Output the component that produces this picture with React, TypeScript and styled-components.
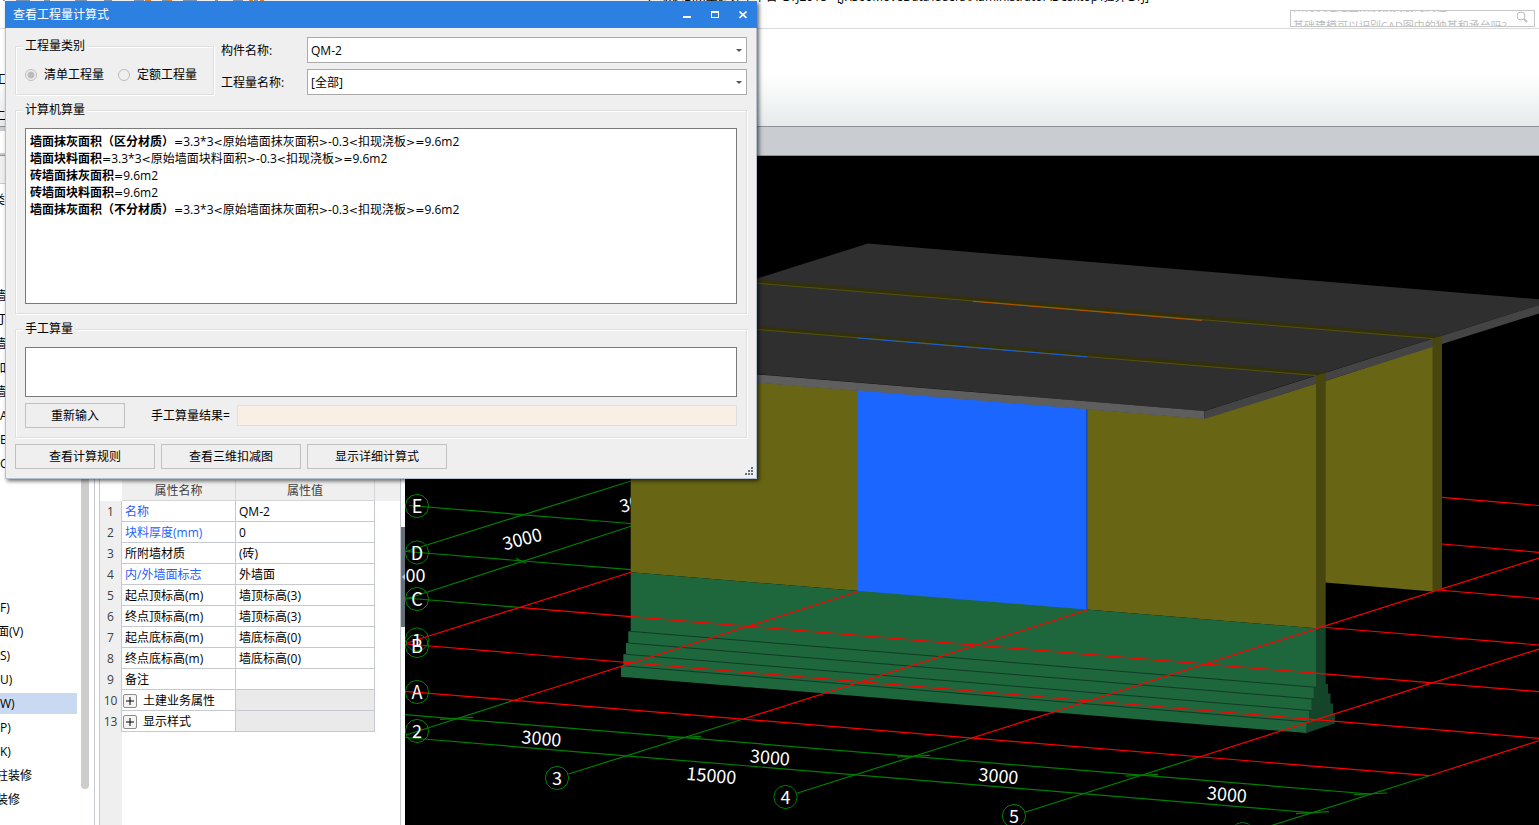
import React from "react";
import styled, { createGlobalStyle, css } from "styled-components";

const GlobalStyle = createGlobalStyle`
  * { box-sizing: border-box; }
  body {
    margin: 0;
    background: #fff;
    color: #000;
    font: 12px/16px "Open Sans", "Noto Sans CJK SC", sans-serif;
    overflow: hidden;
  }
  button, input, select, textarea { font: inherit; color: inherit; }
`;

const Page = styled.div`
  position: relative;
  display: flex;
  flex-direction: column;
  height: 100vh;
  overflow: hidden;
`;

/* ---------- main window: header ---------- */

const Header = styled.header`
  display: flex;
  justify-content: flex-end;
  height: 29px;
  border-bottom: 1px solid #d9d9d9;
  padding-right: 4px;
  overflow: hidden;
`;

const QuickBar = styled.svg`
  display: block;
  flex: none;
  width: 280px;
  height: 2px;
  margin-right: auto;
`;

const WindowTitle = styled.h1`
  margin: -11px 141px 0 0;
  font-size: 12px;
  line-height: 16px;
  font-weight: 400;
  white-space: nowrap;
`;

const SearchBox = styled.div`
  display: flex;
  width: 245px;
  height: 17px;
  margin-top: 10px;
  border: 1px solid #c6c6c6;
  background: #fff;
  overflow: hidden;
`;

const Ticker = styled.div`
  flex: 1;
  margin-top: -12px;
  padding-left: 2px;
`;

const TickerLink = styled.a`
  display: block;
  height: 19px;
  font-size: 11px;
  line-height: 16px;
  color: #bdbdbd;
  text-decoration: none;
  white-space: nowrap;
`;

const SearchButton = styled.button`
  width: 24px;
  padding: 0;
  border: 0;
  background: none;
`;

const Ribbon = styled.div`
  display: flex;
  flex-direction: column;
  flex: none;
  height: 98px;
  padding-top: 43px;
  gap: 20px;
  background: linear-gradient(#fff 0, #fff 45px, #f4f7f7 68px, #e6eaea 97px);
  border-bottom: 1px solid #8e929b;
`;

const RibbonLabel = styled.span`
  height: 16px;
  margin-left: -6px;
`;

const ContextBar = styled.div`
  flex: none;
  height: 29px;
  padding: 4px 0;
  background: #c9ccd1;
  border-bottom: 1px solid #8e929b;
`;

const ContextInput = styled.div`
  width: 60px;
  height: 22px;
  background: #fff;
`;

/* ---------- workspace ---------- */

const Workspace = styled.main`
  display: flex;
  flex: 1;
  min-height: 0;
`;

const TreePanel = styled.nav`
  display: flex;
  flex: none;
  width: 95px;
  border-right: 1px solid #c6c9cf;
  overflow: hidden;
`;

const TreeColumn = styled.div`
  width: 81px;
`;

const TreeHeader = styled.div`
  height: 28px;
  margin-bottom: 4px;
  background: #efefef;
  border-bottom: 1px solid #c6c9cf;
`;

const TreeRow = styled.div<{ $active?: boolean }>`
  display: flex;
  align-items: center;
  height: 24px;
  ${(p) =>
    p.$active &&
    css`
      height: 21px;
      margin: 1px 0 2px;
      width: 77px;
      background: #c8d9f1;
    `}
`;

const TreeText = styled.span<{ $cut: number }>`
  margin-left: ${(p) => -p.$cut}px;
  white-space: nowrap;
`;

const ScrollThumb = styled.div`
  width: 8px;
  height: 633px;
  border-radius: 4px;
  background: #cdcdcd;
`;

const PropertyPanel = styled.section`
  flex: none;
  width: 302px;
  margin-left: 4px;
  border-left: 1px solid #c6c9cf;
  border-right: 1px solid #c6c9cf;
  display: flex;
  flex-direction: column;
`;

const PropertyTop = styled.div`
  flex: none;
  height: 324px;
`;

const PropertyBody = styled.div`
  flex: 1;
  background: linear-gradient(90deg, #efefef 22px, #fff 22px);
`;

const PropertyHead = styled.div`
  height: 21px;
  margin-left: 22px;
  background: #efefef;
`;

const PropertyTable = styled.table`
  width: 275px;
  margin-top: -21px;
  border-collapse: separate;
  border-spacing: 0;
  table-layout: fixed;
`;

const Cell = styled.td<{ $blue?: boolean; $muted?: boolean }>`
  height: 21px;
  padding: 2px 3px 0;
  line-height: 18px;
  border-right: 1px solid #c6c9cf;
  border-bottom: 1px solid #c6c9cf;
  color: ${(p) => (p.$blue ? "#1f5fff" : "#000")};
  background: ${(p) => (p.$muted ? "#eaeaea" : "#fff")};
  white-space: nowrap;
`;

const HeadCell = styled.th`
  height: 21px;
  padding: 2px 0 0;
  line-height: 18px;
  font-weight: 400;
  color: #404040;
  background: #efefef;
  border-right: 1px solid #d5d5d5;
  border-bottom: 1px solid #d5d5d5;
  &:first-child {
    border: 0;
    background: #fff;
  }
`;

const NumberCell = styled.th`
  padding: 0;
  line-height: 20px;
  font-weight: 400;
  color: #404040;
  background: #efefef;
  border-right: 1px solid #c6c9cf;
`;

const NameWrap = styled.div`
  display: flex;
  align-items: center;
  gap: 6px;
`;

const ExpandButton = styled.button`
  width: 14px;
  height: 14px;
  margin-left: -2px;
  padding: 0;
  border: 1px solid #8c8c8c;
  border-radius: 2px;
  background: #f4f4f4;
  display: grid;
  place-items: center;
`;

const Splitter = styled.div`
  flex: none;
  width: 4px;
  padding-top: 371px;
`;

const SplitterGrip = styled.button`
  display: grid;
  place-items: center;
  width: 4px;
  height: 100px;
  padding: 0;
  border: 0;
  background: #64707c;
`;

const Viewport = styled.section`
  flex: 1;
  min-width: 0;
  background: #000;
  overflow: hidden;
`;

const Scene = styled.svg`
  display: block;
  width: 100%;
  height: 100%;
  font-family: "Noto Sans CJK SC", sans-serif;
  font-size: 18px;
`;

/* ---------- floating dialog ---------- */

const Dialog = styled.section`
  position: absolute;
  left: 5px;
  top: 1px;
  width: 752px;
  background: #efefef;
  border: 1px solid #b4c0d2;
  border-top: 0;
  box-shadow: 2px 2px 4px rgba(0, 0, 0, 0.6);
`;

const DialogTitle = styled.header`
  display: flex;
  align-items: center;
  height: 27px;
  margin: 0 -1px;
  padding: 0 8px;
  color: #fff;
  background: #2b80e1;
`;

const DialogName = styled.h2`
  flex: 1;
  margin: 0;
  font-size: 12px;
  line-height: 16px;
  font-weight: 400;
`;

const CaptionButton = styled.button`
  display: grid;
  place-items: center;
  width: 28px;
  height: 27px;
  padding: 0;
  border: 0;
  background: none;
  &:last-child { margin-right: -8px; }
`;

const DialogBody = styled.div`
  display: flex;
  flex-direction: column;
  gap: 7px;
  padding: 9px;
`;

const TopRow = styled.div`
  display: flex;
  gap: 7px;
`;

const Group = styled.fieldset`
  min-width: 0;
  margin: 0;
  padding: 0 9px 9px;
  border: 1px solid #dfdfdf;
  box-shadow: 1px 1px 0 #fff, inset 1px 1px 0 #fff;
`;

const KindGroup = styled(Group)`
  width: 199px;
  margin-top: 1px;
  padding-bottom: 0;
`;

const Legend = styled.legend`
  position: relative;
  margin-left: -2px;
  padding: 0 2px;
  line-height: 16px;
  background: #efefef;
`;

const RadioRow = styled.div`
  display: flex;
  gap: 14px;
  margin-top: 12px;
`;

const RadioLabel = styled.label`
  display: flex;
  align-items: center;
  gap: 7px;
  line-height: 18px;
`;

const Radio = styled.input`
  appearance: none;
  width: 12px;
  height: 12px;
  margin: 0;
  border: 1px solid #bcbcbc;
  border-radius: 50%;
  &:checked {
    background: radial-gradient(circle, #bcbcbc 3px, transparent 4px);
  }
`;

const SelectGrid = styled.div`
  flex: 1;
  display: grid;
  grid-template-columns: 79px 1fr;
  gap: 6px 7px;
  align-items: center;
`;

const SelectLabel = styled.label`
  padding-top: 2px;
`;

const SelectWrap = styled.div`
  position: relative;
  &::after {
    content: "";
    position: absolute;
    right: 5px;
    top: 12px;
    border: 3px solid transparent;
    border-top-color: #555;
    border-bottom: 0;
    pointer-events: none;
  }
`;

const Select = styled.select`
  display: block;
  width: 100%;
  height: 26px;
  padding: 2px 3px 0;
  appearance: none;
  border: 1px solid #ababab;
  border-radius: 0;
  background: #fff;
`;

const Formulas = styled.div`
  height: 176px;
  margin-top: 10px;
  padding: 4px;
  border: 1px solid #7a7a7a;
  background: #fff;
  line-height: 17px;
`;

const Formula = styled.p`
  margin: 0;
  white-space: nowrap;
`;

const Operator = styled.span`
  font-family: "DejaVu Sans", sans-serif;
  font-size: 11px;
  line-height: 1;
`;

const ManualInput = styled.textarea`
  display: block;
  width: 100%;
  height: 50px;
  margin: 10px 0 6px;
  padding: 4px;
  border: 1px solid #7a7a7a;
  border-radius: 0;
  background: #fff;
  resize: none;
`;

const ResultRow = styled.div`
  display: flex;
  align-items: center;
`;

const Button = styled.button<{ $width: number }>`
  width: ${(p) => p.$width}px;
  height: 25px;
  padding: 0;
  border: 1px solid #c0c0c0;
  background: #efefef;
`;

const ResultLabel = styled.label`
  margin: 0 7px 0 26px;
  white-space: nowrap;
`;

const ResultInput = styled.input`
  flex: 1;
  min-width: 0;
  height: 21px;
  border: 1px solid #dedede;
  background: #faefe5;
`;

const Actions = styled.div`
  display: flex;
  gap: 6px;
  margin-top: -1px;
`;

const ResizeGrip = styled.svg`
  position: absolute;
  right: 3px;
  bottom: 3px;
`;

/* ---------- data ---------- */

type TreeItem = { text: string; cut: number; active?: boolean };

const tree: TreeItem[] = [
  { text: "类", cut: 7 },
  { text: "", cut: 0 },
  { text: "", cut: 0 },
  { text: "", cut: 0 },
  { text: "墙", cut: 6 },
  { text: "丁", cut: 4 },
  { text: "墙", cut: 6 },
  { text: "加", cut: 6 },
  { text: "墙", cut: 6 },
  { text: "A", cut: 0 },
  { text: "E", cut: 0 },
  { text: "C", cut: 0 },
  { text: "", cut: 0 },
  { text: "", cut: 0 },
  { text: "", cut: 0 },
  { text: "", cut: 0 },
  { text: "", cut: 0 },
  { text: "F)", cut: 0 },
  { text: "面(V)", cut: 3 },
  { text: "S)", cut: 0 },
  { text: "U)", cut: 0 },
  { text: "W)", cut: 0, active: true },
  { text: "P)", cut: 0 },
  { text: "K)", cut: 0 },
  { text: "柱装修", cut: 4 },
  { text: "装修", cut: 4 },
];

type Property = { no: number; name: string; value: string; blue?: boolean; group?: boolean };

const properties: Property[] = [
  { no: 1, name: "名称", value: "QM-2", blue: true },
  { no: 2, name: "块料厚度(mm)", value: "0", blue: true },
  { no: 3, name: "所附墙材质", value: "(砖)" },
  { no: 4, name: "内/外墙面标志", value: "外墙面", blue: true },
  { no: 5, name: "起点顶标高(m)", value: "墙顶标高(3)" },
  { no: 6, name: "终点顶标高(m)", value: "墙顶标高(3)" },
  { no: 7, name: "起点底标高(m)", value: "墙底标高(0)" },
  { no: 8, name: "终点底标高(m)", value: "墙底标高(0)" },
  { no: 9, name: "备注", value: "" },
  { no: 10, name: "土建业务属性", value: "", group: true },
  { no: 13, name: "显示样式", value: "", group: true },
];

const formulas: [string, string][] = [
  ["墙面抹灰面积（区分材质）", "=3.3*3<原始墙面抹灰面积>-0.3<扣现浇板>=9.6m2"],
  ["墙面块料面积", "=3.3*3<原始墙面块料面积>-0.3<扣现浇板>=9.6m2"],
  ["砖墙面抹灰面积", "=9.6m2"],
  ["砖墙面块料面积", "=9.6m2"],
  ["墙面抹灰面积（不分材质）", "=3.3*3<原始墙面抹灰面积>-0.3<扣现浇板>=9.6m2"],
];

/* ---------- 3D model drawing ---------- */

type Line = [number, number, number, number];

const greenLines: Line[] = [
  [409, 505.5, 631, 523.5],
  [406, 551.5, 631, 569.7],
  [406, 598, 519, 607.3],
  [406, 551.5, 631, 481],
  [406, 599, 631, 526.3],
  [516, 558.3, 526, 563.3],
  [405, 714.7, 1370, 794],
  [405, 737.5, 1313, 812.8],
  [406, 735, 515, 700],
  [568.5, 774, 743.3, 719],
  [796.7, 793.3, 971.7, 738],
  [1025, 812.3, 1200, 756.7],
  [1270, 826, 1429.3, 775.7],
  [440, 719.3, 473, 717.3],
  [668, 738.3, 701, 736.3],
  [897, 757, 930, 755.3],
  [1126, 776, 1158, 774.3],
  [1354, 794.7, 1387, 793],
  [1296, 813.7, 1329, 811.7],
];

const redLines: Line[] = [
  [406.7, 643, 631, 572.3],
  [519, 607.3, 1539, 691.7],
  [406, 644, 1539, 738.3],
  [405, 691.3, 1429.3, 775.7],
  [515, 700, 857.3, 591.7],
  [743.3, 719, 1087, 610],
  [971.7, 738, 1539, 558],
  [1200, 756.7, 1539, 649],
  [1429.3, 775.7, 1539, 740.7],
  [1442, 497.3, 1539, 505.5],
  [1442, 544, 1539, 552.3],
  [1438, 590, 1539, 598.5],
  [1320, 627, 1539, 645],
];

const axes: [string, number, number][] = [
  ["E", 417, 506],
  ["D", 417, 552.5],
  ["C", 417, 599],
  ["1", 417, 639.5],
  ["B", 417, 646],
  ["A", 417, 692],
  ["2", 417, 731],
  ["3", 557, 778],
  ["4", 785.5, 797],
  ["5", 1014, 816],
  ["6", 1242.5, 834],
];

const dimensions: [string, number, number, number][] = [
  ["3000", 541.5, 738, 5],
  ["3000", 770, 757, 5],
  ["3000", 998.5, 775.5, 5],
  ["3000", 1227, 794, 5],
  ["15000", 711.5, 775, 5],
  ["3000", 522, 538.5, -15],
  ["3000", 639, 501, -15],
  ["00", 415.5, 575, 0],
];

const ring = (cx: number, cy: number) =>
  Array.from({ length: 12 }, (_, i) => {
    const a = (i * Math.PI) / 6;
    return `${(cx + 11.7 * Math.cos(a)).toFixed(1)},${(cy + 11.7 * Math.sin(a)).toFixed(1)}`;
  }).join(" ");

function Lines({ items, color }: { items: Line[]; color: string }) {
  return (
    <g stroke={color} strokeWidth={1.2}>
      {items.map(([x1, y1, x2, y2], i) => (
        <line key={i} x1={x1} y1={y1} x2={x2} y2={y2} />
      ))}
    </g>
  );
}

function Model() {
  return (
    <Scene viewBox="405 156 1134 669" preserveAspectRatio="xMinYMin slice" role="img" aria-label="三维模型">
      <Lines items={greenLines} color="#008000" />
      <g fill="#fff" textAnchor="middle">
        {dimensions.map(([t, x, y, r], i) => (
          <text key={i} x={x} y={y + 7} transform={`rotate(${r} ${x} ${y})`}>
            {t}
          </text>
        ))}
      </g>

      {/* roof slab */}
      <polygon points="868,243.5 1539,299.3 1539,305 1204,411 600,361 600,328" fill="#2f2f2f" />

      {/* rear wall */}
      <polygon points="1325,381 1433,346 1433,591.5 1325,582.6" fill="#686614" />
      <polygon points="700,274.8 1442,335.5 1433,339 700,279" fill="#33310c" />
      <line x1="700" y1="278.6" x2="1433" y2="338.6" stroke="#5c5a12" strokeWidth={0.8} />
      <line x1="973" y1="301.3" x2="1202" y2="320.4" stroke="#b85400" />

      {/* front wall */}
      <polygon points="630.7,372 1204,418.5 1316,383.5 1316,628.3 630.7,572.3" fill="#686614" />
      <polygon points="700,321.2 1325.7,372.5 1316,376 700,325.2" fill="#33310c" />
      <line x1="700" y1="324.8" x2="1316" y2="375.5" stroke="#5c5a12" strokeWidth={0.8} />
      <line x1="857" y1="337.9" x2="1087" y2="356.9" stroke="#1a5fe0" />

      {/* slab edges */}
      <polygon points="600,361.5 1204.5,411 1204.5,419 600,370" fill="#5e5e5e" />
      <polygon points="1204.5,411 1539,305 1539,313.5 1204.5,419" fill="#444" />

      {/* wall end faces */}
      <polygon points="1432.5,338.8 1442,336 1442,588.5 1432.5,591.5" fill="#48460f" />
      <polygon points="1316,376 1325.7,373 1325.7,627 1316,628.3" fill="#48460f" />

      {/* highlighted finish */}
      <polygon points="857.3,390.6 1087.3,409.3 1087.3,610.3 857.3,591.7" fill="#1a66ff" />
      <line x1="1086.7" y1="409.3" x2="1086.7" y2="610" stroke="#1149b8" strokeWidth={1.4} />

      {/* stepped footing */}
      <polygon
        points="1306,721 1316,628.3 1325.7,626.5 1325.7,684 1328,684 1328,693.5 1330.5,693.5 1330.5,703.5 1333,703.5 1333,713.5 1335,713.5 1335,723.3 1306.5,733"
        fill="#14452a"
      />
      <polygon
        points="630.7,572.3 1316,628.3 1316,687 1313.7,687 1313.7,698.5 1311.5,698.5 1311.5,710.5 1309,710.5 1309,722 1306.5,722 1306.5,733 621,676.7 621,665.7 623.3,665.7 623.3,654.3 626,654.3 626,643 628.3,643 628.3,631.3 630.7,631.3"
        fill="#1e673c"
      />
      <g stroke="#103a24">
        <line x1="630" y1="631.3" x2="1316" y2="687.3" />
        <line x1="628" y1="643" x2="1313.7" y2="699" />
        <line x1="626" y1="654.3" x2="1311.5" y2="710.6" />
        <line x1="623" y1="665.8" x2="1309" y2="722" />
      </g>

      <Lines items={redLines} color="#f00" />

      <g fill="none" stroke="#008000">
        {axes.map(([t, x, y]) => (
          <polygon key={t} points={ring(x, y)} />
        ))}
      </g>
      <g fill="#fff" textAnchor="middle">
        {axes.map(([t, x, y]) => (
          <text key={t} x={x} y={y + 7}>
            {t}
          </text>
        ))}
      </g>
    </Scene>
  );
}

/* ---------- application ---------- */

function PropertyEditor() {
  return (
    <PropertyPanel>
      <PropertyTop />
      <PropertyBody>
        <PropertyHead />
        <PropertyTable>
          <colgroup>
            <col style={{ width: 22 }} />
            <col style={{ width: 114 }} />
            <col style={{ width: 139 }} />
          </colgroup>
          <thead>
            <tr>
              <HeadCell aria-label="序号" />
              <HeadCell scope="col">属性名称</HeadCell>
              <HeadCell scope="col">属性值</HeadCell>
            </tr>
          </thead>
          <tbody>
            {properties.map((p) => (
              <tr key={p.no}>
                <NumberCell scope="row">{p.no}</NumberCell>
                <Cell $blue={p.blue}>
                  <NameWrap>
                    {p.group && (
                      <ExpandButton aria-label={`展开${p.name}`}>
                        <svg width="8" height="8" viewBox="0 0 8 8">
                          <path d="M0 4h8M4 0v8" stroke="#000" />
                        </svg>
                      </ExpandButton>
                    )}
                    {p.name}
                  </NameWrap>
                </Cell>
                <Cell $muted={p.group}>{p.value}</Cell>
              </tr>
            ))}
          </tbody>
        </PropertyTable>
      </PropertyBody>
    </PropertyPanel>
  );
}

function Expression({ text }: { text: string }) {
  return (
    <>
      {text.split(/([=<>])/).map((part, i) =>
        i % 2 ? <Operator key={i}>{part}</Operator> : part
      )}
    </>
  );
}

function FormulaDialog() {
  return (
    <Dialog role="dialog" aria-labelledby="formula-title">
      <DialogTitle>
        <DialogName id="formula-title">查看工程量计算式</DialogName>
        <CaptionButton aria-label="最小化">
          <svg width="8" height="8" viewBox="0 0 8 8">
            <path d="M0 5h8v2H0z" fill="#fff" />
          </svg>
        </CaptionButton>
        <CaptionButton aria-label="最大化">
          <svg width="8" height="8" viewBox="0 0 8 8">
            <path d="M0 0h8v7H0zM1 2v4h6V2z" fill="#fff" fillRule="evenodd" />
          </svg>
        </CaptionButton>
        <CaptionButton aria-label="关闭">
          <svg width="8" height="8" viewBox="0 0 8 8">
            <path d="M0.5 0.5l7 6.5M7.5 0.5l-7 6.5" stroke="#fff" strokeWidth="1.6" />
          </svg>
        </CaptionButton>
      </DialogTitle>
      <DialogBody>
        <TopRow>
          <KindGroup>
            <Legend>工程量类别</Legend>
            <RadioRow>
              <RadioLabel>
                <Radio type="radio" name="kind" defaultChecked disabled />
                清单工程量
              </RadioLabel>
              <RadioLabel>
                <Radio type="radio" name="kind" disabled />
                定额工程量
              </RadioLabel>
            </RadioRow>
          </KindGroup>
          <SelectGrid>
            <SelectLabel htmlFor="component">构件名称:</SelectLabel>
            <SelectWrap>
              <Select id="component">
                <option>QM-2</option>
              </Select>
            </SelectWrap>
            <SelectLabel htmlFor="quantity">工程量名称:</SelectLabel>
            <SelectWrap>
              <Select id="quantity">
                <option>[全部]</option>
              </Select>
            </SelectWrap>
          </SelectGrid>
        </TopRow>
        <Group>
          <Legend>计算机算量</Legend>
          <Formulas>
            {formulas.map(([name, expression]) => (
              <Formula key={name}>
                <b>{name}</b>
                <Expression text={expression} />
              </Formula>
            ))}
          </Formulas>
        </Group>
        <Group>
          <Legend>手工算量</Legend>
          <ManualInput aria-label="手工算量" />
          <ResultRow>
            <Button $width={100}>重新输入</Button>
            <ResultLabel htmlFor="result">手工算量结果=</ResultLabel>
            <ResultInput id="result" readOnly />
          </ResultRow>
        </Group>
        <Actions>
          <Button $width={140}>查看计算规则</Button>
          <Button $width={140}>查看三维扣减图</Button>
          <Button $width={140}>显示详细计算式</Button>
        </Actions>
      </DialogBody>
      <ResizeGrip width="8" height="8" viewBox="0 0 8 8" aria-hidden="true">
        <path d="M6 0h2v2H6zM3 3h2v2H3zM6 3h2v2H6zM0 6h2v2H0zM3 6h2v2H3zM6 6h2v2H6z" fill="#64707c" />
      </ResizeGrip>
    </Dialog>
  );
}

export default function App() {
  return (
    <>
      <GlobalStyle />
      <Page>
        <Header>
          <QuickBar viewBox="0 0 280 2" aria-hidden="true">
            <path d="M3 0h2M16 0h14M44 0h6M75 0h12M104 0h8M134 0h10M162 0h6M183 0h14M215 0h3M233 0h10M254 0h4" stroke="#7d9cc4" strokeWidth="2" />
            <path d="M145 0h6M168 0h4M249 0h4M260 0h4" stroke="#e08a3c" strokeWidth="2" />
          </QuickBar>
          <WindowTitle>广联达BIM土建计量平台 GTJ2018 - [J:\360MoveData\Users\Administrator\Desktop\验算GTJ]</WindowTitle>
          <SearchBox>
            <Ticker>
              <TickerLink href="#faq-1">如何快速建立梁及板负筋的属性?</TickerLink>
              <TickerLink href="#faq-2">基础建模可以识别CAD图中的独基和承台吗?</TickerLink>
            </Ticker>
            <SearchButton aria-label="搜索">
              <svg width="12" height="12" viewBox="0 0 12 12" fill="none" stroke="#bdbdbd">
                <circle cx="5" cy="5" r="4" />
                <path d="M8 8l3 3" strokeWidth="1.8" />
              </svg>
            </SearchButton>
          </SearchBox>
        </Header>
        <Ribbon>
          <RibbonLabel>工</RibbonLabel>
          <RibbonLabel>二</RibbonLabel>
        </Ribbon>
        <ContextBar>
          <ContextInput />
        </ContextBar>
        <Workspace>
          <TreePanel>
            <TreeColumn>
              <TreeHeader />
              {tree.map((item, i) => (
                <TreeRow key={i} $active={item.active}>
                  <TreeText $cut={item.cut}>{item.text}</TreeText>
                </TreeRow>
              ))}
            </TreeColumn>
            <ScrollThumb />
          </TreePanel>
          <PropertyEditor />
          <Splitter>
            <SplitterGrip aria-label="折叠面板">
              <svg width="4" height="6" viewBox="0 0 4 6">
                <path d="M4 0v6L1 3z" fill="#c6c9cf" />
              </svg>
            </SplitterGrip>
          </Splitter>
          <Viewport>
            <Model />
          </Viewport>
        </Workspace>
        <FormulaDialog />
      </Page>
    </>
  );
}
